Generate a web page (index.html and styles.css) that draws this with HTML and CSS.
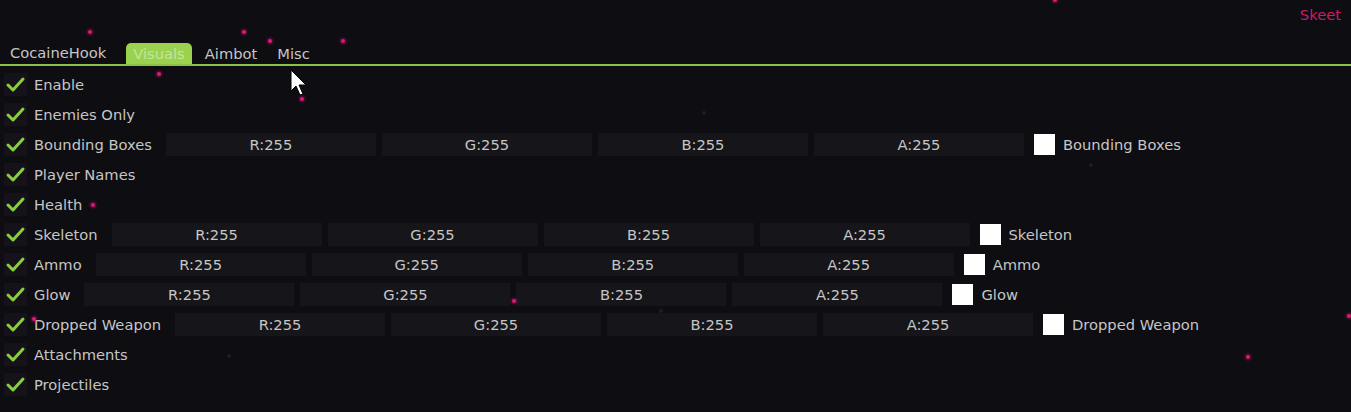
FILE: index.html
```html
<!DOCTYPE html>
<html>
<head>
<meta charset="utf-8">
<link rel="stylesheet" href="styles.css">
</head>
<body>
<div class="app">
  <div class="header"><span class="brand">Skeet</span></div>
  <div class="tabbar">
    <span class="title">CocaineHook</span>
    <span class="tab active">Visuals</span>
    <span class="tab">Aimbot</span>
    <span class="tab">Misc</span>
  </div>
  <div class="rows">
    <div class="row"><span class="cb"><svg viewBox="0 0 23 23"><polyline points="4,12 9,17 19,6"/></svg></span><span class="label">Enable</span></div>
    <div class="row"><span class="cb"><svg viewBox="0 0 23 23"><polyline points="4,12 9,17 19,6"/></svg></span><span class="label">Enemies Only</span></div>
    <div class="row"><span class="cb"><svg viewBox="0 0 23 23"><polyline points="4,12 9,17 19,6"/></svg></span><span class="label">Bounding Boxes</span>
      <div class="sliders"><span class="sl">R:255</span><span class="sl">G:255</span><span class="sl">B:255</span><span class="sl">A:255</span></div>
      <span class="swatch"></span><span class="label">Bounding Boxes</span></div>
    <div class="row"><span class="cb"><svg viewBox="0 0 23 23"><polyline points="4,12 9,17 19,6"/></svg></span><span class="label">Player Names</span></div>
    <div class="row"><span class="cb"><svg viewBox="0 0 23 23"><polyline points="4,12 9,17 19,6"/></svg></span><span class="label">Health</span></div>
    <div class="row"><span class="cb"><svg viewBox="0 0 23 23"><polyline points="4,12 9,17 19,6"/></svg></span><span class="label">Skeleton</span>
      <div class="sliders"><span class="sl">R:255</span><span class="sl">G:255</span><span class="sl">B:255</span><span class="sl">A:255</span></div>
      <span class="swatch"></span><span class="label">Skeleton</span></div>
    <div class="row"><span class="cb"><svg viewBox="0 0 23 23"><polyline points="4,12 9,17 19,6"/></svg></span><span class="label">Ammo</span>
      <div class="sliders"><span class="sl">R:255</span><span class="sl">G:255</span><span class="sl">B:255</span><span class="sl">A:255</span></div>
      <span class="swatch"></span><span class="label">Ammo</span></div>
    <div class="row"><span class="cb"><svg viewBox="0 0 23 23"><polyline points="4,12 9,17 19,6"/></svg></span><span class="label">Glow</span>
      <div class="sliders"><span class="sl">R:255</span><span class="sl">G:255</span><span class="sl">B:255</span><span class="sl">A:255</span></div>
      <span class="swatch"></span><span class="label">Glow</span></div>
    <div class="row"><span class="cb"><svg viewBox="0 0 23 23"><polyline points="4,12 9,17 19,6"/></svg></span><span class="label">Dropped Weapon</span>
      <div class="sliders"><span class="sl">R:255</span><span class="sl">G:255</span><span class="sl">B:255</span><span class="sl">A:255</span></div>
      <span class="swatch"></span><span class="label">Dropped Weapon</span></div>
    <div class="row"><span class="cb"><svg viewBox="0 0 23 23"><polyline points="4,12 9,17 19,6"/></svg></span><span class="label">Attachments</span></div>
    <div class="row"><span class="cb"><svg viewBox="0 0 23 23"><polyline points="4,12 9,17 19,6"/></svg></span><span class="label">Projectiles</span></div>
  </div>

  <div class="particles">
    <span class="dot" style="left:88px;top:30px"></span>
    <span class="dot" style="left:242px;top:30px"></span>
    <span class="dot" style="left:268px;top:39px"></span>
    <span class="dot" style="left:341px;top:39px"></span>
    <span class="dot" style="left:157px;top:72px"></span>
    <span class="dot" style="left:300px;top:97px"></span>
    <span class="dot" style="left:91px;top:203px"></span>
    <span class="dot" style="left:512px;top:299px"></span>
    <span class="dot" style="left:1246px;top:355px"></span>
    <span class="dot" style="left:1053px;top:-2px"></span>
    <span class="dot" style="left:1347px;top:314px"></span>
    <span class="dot" style="left:32px;top:317px"></span>
    <span class="dot dim" style="left:702px;top:111px"></span>
    <span class="dot dim" style="left:1089px;top:163px"></span>
    <span class="dot dim" style="left:227px;top:354px"></span>
    <span class="dot dim" style="left:659px;top:309px"></span>
  </div>

  <svg class="cursor" width="18" height="28" viewBox="0 0 18 28">
    <path d="M1 1 L1 22 L6 17 L10 26 L13 25 L9 16 L16 16 Z" fill="#fff" stroke="#000" stroke-width="1"/>
  </svg>
</div>
</body>
</html>
```

FILE: styles.css
```css
html, body {
  margin: 0;
  padding: 0;
  background: #0e0d11;
}
.app {
  position: relative;
  width: 1351px;
  height: 412px;
  overflow: hidden;
  font-family: "DejaVu Sans", Verdana, sans-serif;
  font-size: 14.7px;
  color: #c6c6c6;
}
.header {
  height: 43px;
  box-sizing: border-box;
  padding: 6px 10px 0 0;
  display: flex;
  justify-content: flex-end;
  line-height: 17px;
}
.brand {
  color: #cc1c68;
}
.tabbar {
  height: 21px;
  border-bottom: 2px solid #8cc046;
  display: flex;
  align-items: flex-end;
  padding-left: 10px;
  gap: 6px;
}
.title {
  line-height: 22px;
  margin-right: 14px;
}
.tab {
  line-height: 22px;
  height: 21px;
  padding: 0 7px;
  border-radius: 5px 5px 0 0;
}
.tab.active {
  background: #9ad24f;
  color: #c4e59a;
}
.rows {
  padding-top: 3px;
}
.row {
  height: 30px;
  display: flex;
  align-items: center;
}
.cb {
  width: 23px;
  height: 23px;
  margin-left: 4px;
  background: #151319;
  display: flex;
}
.cb svg {
  width: 23px;
  height: 23px;
}
.cb polyline {
  fill: none;
  stroke: #88cf40;
  stroke-width: 3;
  stroke-linecap: round;
  stroke-linejoin: round;
}
.label {
  margin-left: 7px;
  white-space: nowrap;
}
.sliders {
  display: flex;
  gap: 6px;
  margin-left: 14px;
}
.sl {
  width: 210px;
  height: 23px;
  line-height: 23px;
  background: #16151a;
  text-align: center;
}
.swatch {
  width: 21px;
  height: 21px;
  background: #fff;
  margin-left: 10px;
}
.swatch + .label {
  margin-left: 8px;
}
.particles {
  position: absolute;
  inset: 0;
  pointer-events: none;
}
.dot {
  position: absolute;
  width: 4px;
  height: 4px;
  border-radius: 50%;
  background: #e0157a;
  box-shadow: 0 0 3px 1px rgba(200, 20, 110, 0.5);
}
.dot.dim {
  background: #2a1822;
  box-shadow: none;
}
.cursor {
  position: absolute;
  left: 290px;
  top: 69px;
}
```
